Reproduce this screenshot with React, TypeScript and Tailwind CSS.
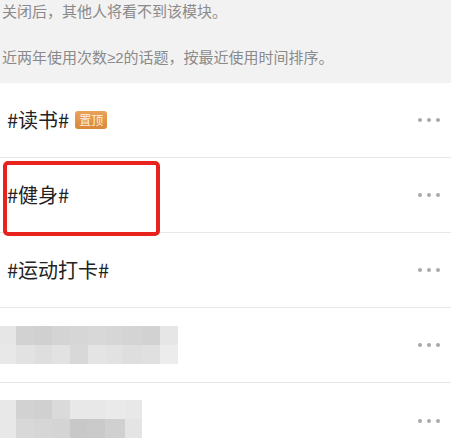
import React from "react";

type Topic = {
  name: string;
  pinned?: boolean;
};

const topics: Topic[] = [
  { name: "#读书#", pinned: true },
  { name: "#健身#" },
  { name: "#运动打卡#" },
];

// mosaic blocks standing in for the blurred topic names
const mosaicA = [
  ["#e6e6e6", "#d2d2d2", "#d0d0d0", "#d4d4d4", "#d6d6d6", "#d8d8d8", "#d6d6d6", "#d4d4d4", "#d2d2d2", "#e6e6e6"],
  ["#e8e8e8", "#e2e2e2", "#dedede", "#e2e2e2", "#d8d8d8", "#e4e4e4", "#e2e2e2", "#dedede", "#e0e0e0", "#ececec"],
];
const mosaicB = [
  ["#e8e8e8", "#d2d2d2", "#d0d0d0", "#dadada", "#e8e8e8", "#e8e8e8", "#eaeaea", "#e8e8e8"],
  ["#e8e8e8", "#d8d8d8", "#d6d6d6", "#d4d4d4", "#c8c8c8", "#cacaca", "#d0d0d0", "#e4e4e4"],
];

const Dots = () => (
  <div className="flex items-center gap-[5px] pr-[11px]">
    <span className="h-[4px] w-[4px] rounded-full bg-[#a8a8a8]" />
    <span className="h-[4px] w-[4px] rounded-full bg-[#a8a8a8]" />
    <span className="h-[4px] w-[4px] rounded-full bg-[#a8a8a8]" />
  </div>
);

const Mosaic = ({ rows, widths }: { rows: string[][]; widths: number[] }) => (
  <div className="flex flex-col">
    {rows.map((row, i) => (
      <div key={i} className="flex h-[19px]">
        {row.map((c, j) => (
          <div key={j} className="h-full" style={{ width: widths[j], backgroundColor: c }} />
        ))}
      </div>
    ))}
  </div>
);

const App = () => {
  return (
    <div
      className="h-[439px] w-[451px] overflow-hidden bg-white"
      style={{ fontFamily: '"Noto Sans CJK SC", "Noto Sans", sans-serif' }}
    >
      <div className="bg-[#f2f2f2] pb-[14px] pl-[2px] text-[15px] leading-[22px] text-[#8a8a8a]">
        <p>关闭后，其他人将看不到该模块。</p>
        <p className="mt-[24px]">
          近两年使用次数<span style={{ fontFamily: '"Liberation Sans", sans-serif' }}>≥2</span>
          的话题，按最近使用时间排序。
        </p>
      </div>

      <ul className="relative">
        {topics.map((t) => (
          <li
            key={t.name}
            className="flex h-[75px] items-center justify-between border-b border-[#e8e8e8] pl-[7px]"
          >
            <div className="flex items-center gap-[6px]">
              <span className="text-[20px] leading-none text-[#222]">{t.name}</span>
              {t.pinned && (
                <span className="rounded-[3px] bg-gradient-to-b from-[#eaa35a] to-[#d98838] px-[4px] text-[12px] leading-[18px] text-[#fdeedd]">
                  置顶
                </span>
              )}
            </div>
            <Dots />
          </li>
        ))}
        <li className="flex h-[75px] items-center justify-between border-b border-[#e8e8e8]">
          <Mosaic rows={mosaicA} widths={[16, 19, 17, 18, 18, 19, 15, 20, 18, 18]} />
          <Dots />
        </li>
        <li className="flex h-[75px] items-center justify-between">
          <div className="-mt-[4px]">
            <Mosaic rows={mosaicB} widths={[16, 18, 18, 18, 17, 18, 20, 17]} />
          </div>
          <Dots />
        </li>

        <div className="pointer-events-none absolute left-[3px] top-[78px] h-[75px] w-[157px] rounded-[5px] border-[4px] border-[#e8231e]" />
      </ul>
    </div>
  );
};

export default App;
